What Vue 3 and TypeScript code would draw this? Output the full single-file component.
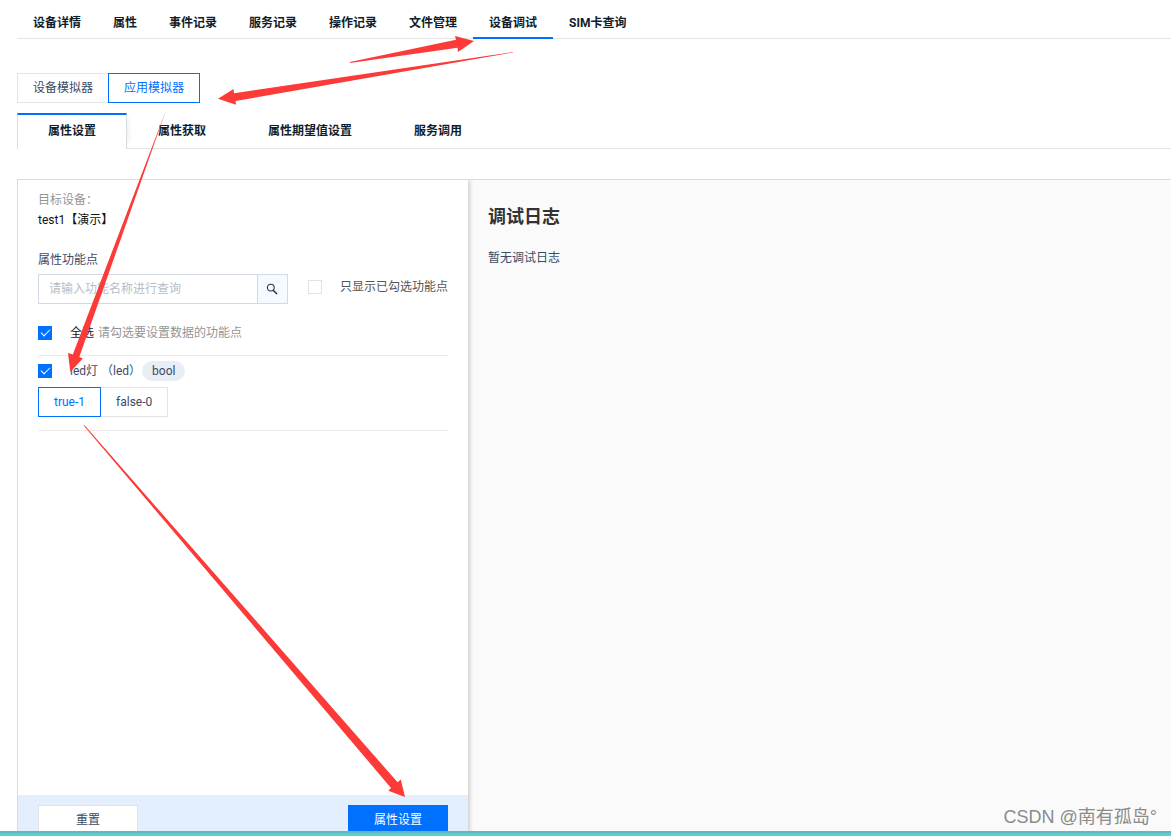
<script setup lang="ts">
import { computed, ref } from 'vue'

const sections: string[] = ['设备详情', '属性', '事件记录', '服务记录', '操作记录', '文件管理', '设备调试', 'SIM卡查询']
const activeSection = ref('设备调试')

const simulators: string[] = ['设备模拟器', '应用模拟器']
const activeSimulator = ref('应用模拟器')

const actions: string[] = ['属性设置', '属性获取', '属性期望值设置', '服务调用']
const activeAction = ref('属性设置')

const keyword = ref('')
const onlyChecked = ref(false)
const ledChecked = ref(true)
const allChecked = computed({
  get: () => ledChecked.value,
  set: (value: boolean) => {
    ledChecked.value = value
  },
})

const ledOptions: string[] = ['true-1', 'false-0']
const ledValue = ref('true-1')

function reset(): void {
  keyword.value = ''
  ledValue.value = 'true-1'
}
</script>

<template>
  <div class="page">
    <nav class="sections">
      <a
        v-for="item in sections"
        :key="item"
        href="#"
        class="section"
        :class="{ active: item === activeSection }"
        @click.prevent="activeSection = item"
      >{{ item }}</a>
    </nav>

    <div class="group simulators">
      <button
        v-for="item in simulators"
        :key="item"
        type="button"
        class="option"
        :class="{ active: item === activeSimulator }"
        @click="activeSimulator = item"
      >{{ item }}</button>
    </div>

    <div class="actions" role="tablist">
      <button
        v-for="item in actions"
        :key="item"
        type="button"
        role="tab"
        class="action"
        :class="{ active: item === activeAction }"
        :aria-selected="item === activeAction"
        @click="activeAction = item"
      >{{ item }}</button>
    </div>

    <main class="workspace">
      <section class="settings">
        <div class="content">
          <div class="muted">目标设备：</div>
          <div class="device">test1【演示】</div>

          <label class="field-label" for="keyword">属性功能点</label>
          <div class="filter">
            <div class="search">
              <input id="keyword" v-model="keyword" type="text" placeholder="请输入功能名称进行查询" />
              <button type="button" aria-label="查询">
                <svg width="12" height="12" viewBox="0 0 12 12" fill="none" stroke="#2b3440">
                  <circle cx="4.8" cy="4.6" r="3.4" stroke-width="1.1" />
                  <path d="M7.2 7.2 L11 11" stroke-width="1.6" />
                </svg>
              </button>
            </div>
            <label class="check only">
              <input v-model="onlyChecked" type="checkbox" />
              <span>只显示已勾选功能点</span>
            </label>
          </div>

          <div class="all">
            <label class="check">
              <input v-model="allChecked" type="checkbox" />
              <span>全选</span>
            </label>
            <span class="muted">请勾选要设置数据的功能点</span>
          </div>

          <div class="feature">
            <div class="feature-head">
              <label class="check">
                <input v-model="ledChecked" type="checkbox" />
                <span>led灯 （led）</span>
              </label>
              <span class="badge">bool</span>
            </div>
            <div class="group">
              <button
                v-for="item in ledOptions"
                :key="item"
                type="button"
                class="option"
                :class="{ active: item === ledValue }"
                @click="ledValue = item"
              >{{ item }}</button>
            </div>
          </div>
        </div>

        <footer class="footer">
          <button type="button" class="reset" @click="reset">重置</button>
          <button type="button" class="submit">属性设置</button>
        </footer>
      </section>

      <section class="log">
        <h2>调试日志</h2>
        <p>暂无调试日志</p>
      </section>
    </main>

    <svg class="arrows" width="520" height="800" viewBox="0 0 520 800" fill="#fc3a38" aria-hidden="true">
      <path d="M350 63 L350 62 L456 39.7 L455 36 L474 41 L458 52 L457.5 47.8 Z" />
      <path d="M513 52 L234 93.3 L233.5 89 L218 98.7 L236 104.8 L235.5 101 L513 52.5 Z" />
      <path d="M166.5 109 L72.8 354.5 L68 353 L70.3 372 L82.8 358.4 L79.3 357 Z" />
      <path d="M83.6 425.6 L391 788 L388.3 790.7 L405 797 L400.8 779.5 L397.6 782.3 L84.8 425.6 Z" />
    </svg>
    <div class="watermark">CSDN @南有孤岛°</div>
    <div class="strip"></div>
  </div>
</template>

<style>
body {
  margin: 0;
  background: #fff;
}
</style>

<style scoped>
.page {
  position: relative;
  display: flex;
  flex-direction: column;
  box-sizing: border-box;
  height: 100vh;
  padding-left: 17px;
  overflow: hidden;
  font: 12px/20px Roboto, "Noto Sans CJK SC", sans-serif;
  color: #3b4a66;
}

button,
input {
  box-sizing: border-box;
  margin: 0;
  font: inherit;
  color: inherit;
}

button {
  cursor: pointer;
}

.sections {
  display: flex;
  flex: none;
  border-bottom: 1px solid #e5e5e5;
}

.section {
  margin-bottom: -1px;
  padding: 13px 16px 4px;
  border-bottom: 2px solid transparent;
  font-weight: 700;
  color: #111d2c;
  text-decoration: none;
  white-space: nowrap;
}

.section.active {
  border-bottom-color: #0070ff;
}

.group {
  display: flex;
}

.simulators {
  flex: none;
  margin: 34px 0 10px;
}

.option {
  height: 30px;
  padding: 0 15px;
  border: 1px solid #e3e4e6;
  background: #fff;
  white-space: nowrap;
}

.option + .option {
  margin-left: -1px;
}

.option.active {
  position: relative;
  border-color: #0070ff;
  color: #0070ff;
}

.actions {
  display: flex;
  flex: none;
  height: 36px;
  box-shadow: inset 0 -1px #e3e4e6;
}

.action {
  padding: 0 30px 2px;
  border: solid transparent;
  border-width: 2px 1px 0;
  background: none;
  font-weight: 700;
  color: #111d2c;
  white-space: nowrap;
}

.action.active {
  border-color: #0070ff #d8dde3 #d8dde3;
  background: #fff;
  box-shadow: 6px 0 6px -6px rgba(0, 0, 0, 0.12);
}

.workspace {
  display: flex;
  flex: 1;
  min-height: 0;
  margin-top: 30px;
  border: solid #d9dbde;
  border-width: 1px 0 0 1px;
}

.settings {
  z-index: 1;
  display: flex;
  flex: none;
  flex-direction: column;
  width: 450px;
  background: #fff;
  box-shadow: 1px 0 5px rgba(0, 0, 0, 0.24);
  clip-path: inset(0 -8px 0 0);
}

.content {
  flex: 1;
  padding: 10px 20px;
}

.muted {
  color: #959595;
}

.device {
  color: #111;
}

.field-label {
  display: block;
  margin: 20px 0 4px;
}

.filter {
  display: flex;
  align-items: flex-start;
  gap: 20px;
}

.search {
  display: flex;
  width: 250px;
  height: 30px;
}

.search input {
  flex: 1;
  min-width: 0;
  padding: 0 10px;
  border: 1px solid #d3dae3;
  background: #fff;
  outline: none;
}

.search input::placeholder {
  color: #b6bdc6;
  opacity: 1;
}

.search button {
  display: flex;
  align-items: center;
  justify-content: center;
  width: 31px;
  margin-left: -1px;
  padding: 0;
  border: 1px solid #d3dae3;
  background: #f4faff;
}

.check {
  display: flex;
  align-items: center;
  gap: 18px;
  white-space: nowrap;
}

.check input {
  display: flex;
  align-items: center;
  justify-content: center;
  flex: none;
  width: 14px;
  height: 14px;
  border: 1px solid #e0e2e4;
  appearance: none;
  background: #fff;
}

.check input:checked {
  border-color: #0070ff;
  background: #0070ff;
}

.check input:checked::after {
  width: 9px;
  height: 5px;
  margin-bottom: 3px;
  box-sizing: border-box;
  border: solid #fff;
  border-width: 0 0 1px 1px;
  content: "";
  transform: rotate(-45deg);
}

.only {
  margin-top: 4px;
  color: #555;
}

.filter .only {
  margin-top: 3px;
}

.all {
  display: flex;
  gap: 4px;
  padding: 19px 0 12px;
  border-bottom: 1px solid #ebebeb;
}

.all .check {
  color: #222;
}

.feature {
  padding: 5px 0 13px;
  border-bottom: 1px solid #ebebeb;
}

.feature-head {
  display: flex;
  align-items: center;
  gap: 1px;
  margin-bottom: 6px;
}

.badge {
  padding: 0 10px;
  border-radius: 10px;
  background: #e8eef5;
}

.footer {
  display: flex;
  flex: none;
  justify-content: space-between;
  padding: 10px 20px 1px;
  background: #e3effd;
}

.footer button {
  width: 100px;
  height: 30px;
  border: 1px solid #e0e2e6;
  background: #fff;
}

.footer .submit {
  border-color: #0070ff;
  background: #0070ff;
  color: #fff;
}

.log {
  flex: 1;
  padding: 25px 20px;
  background: #fafafa;
}

.log h2 {
  margin: 0 0 19px;
  font-size: 18px;
  line-height: 24px;
  color: #333;
}

.log p {
  margin: 0;
}

.arrows {
  position: absolute;
  z-index: 2;
  top: 0;
  left: 0;
  pointer-events: none;
}

.watermark {
  position: absolute;
  right: 14px;
  bottom: 7px;
  font: 18px/24px "Liberation Sans", "Noto Sans CJK SC", sans-serif;
  color: #8b8b8b;
}

.strip {
  position: absolute;
  z-index: 3;
  right: 0;
  bottom: 0;
  left: 0;
  height: 5px;
  box-sizing: border-box;
  border-top: 2px solid #57bcbd;
  background: #60cecf;
}
</style>
